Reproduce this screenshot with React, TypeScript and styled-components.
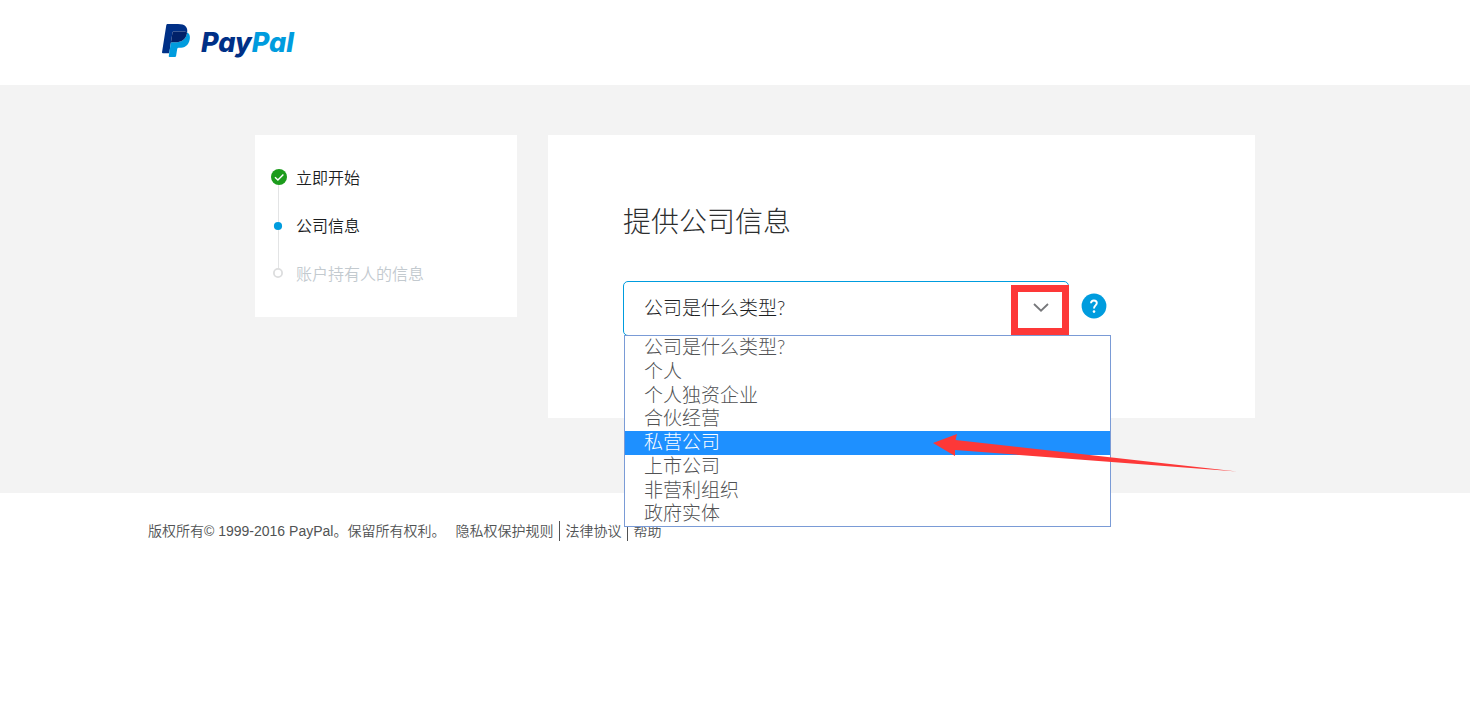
import React, { useState } from 'react';
import styled, { createGlobalStyle } from 'styled-components';

const GlobalStyle = createGlobalStyle`
  *, *::before, *::after { box-sizing: border-box; }
  body {
    margin: 0;
    background: #fff;
    color: #2c2e2f;
    font-family: "Liberation Sans", "Noto Sans CJK SC", sans-serif;
    font-weight: 300;
  }
`;

const Header = styled.header`
  height: 85px;
  max-width: 1174px;
  margin: 0 auto;
  padding: 24px 14px 0;
`;

const LogoLink = styled.a`
  display: inline-flex;
  align-items: flex-start;
  gap: 11px;
  text-decoration: none;
`;

const Wordmark = styled.span`
  font: italic 800 27px/37px Inter, sans-serif;
  color: #003087;
`;

const WordmarkTail = styled.span`
  color: #009cde;
`;

const Stage = styled.div`
  background: #f3f3f3;
  padding: 50px 0 75px;
`;

const Columns = styled.div`
  display: grid;
  grid-template-columns: 262px 1fr;
  align-items: start;
  gap: 31px;
  max-width: 1040px;
  margin: 0 auto;
  padding-left: 40px;
`;

const StepList = styled.ol`
  margin: 0;
  padding: 19px 16px;
  list-style: none;
  background: #fff;
`;

const Step = styled.li<{ $pending?: boolean }>`
  display: flex;
  align-items: center;
  gap: 9px;
  height: 48px;
  font-size: 16px;
  font-weight: 350;
  line-height: 24px;
  color: ${(p) => (p.$pending ? '#c3cacf' : '#1c1e1f')};
`;

const StepLabel = styled.span`
  padding-top: 2px;
`;

const Card = styled.main`
  background: #fff;
  padding: 68px 75px 82px;
`;

const Title = styled.h1`
  margin: 0 0 38px;
  font-size: 28px;
  line-height: 40px;
  font-weight: 300;
`;

const FieldRow = styled.div`
  position: relative;
  display: flex;
  align-items: flex-start;
  gap: 12px;
`;

const SelectBox = styled.div`
  position: relative;
  flex: 0 1 446px;
`;

const Select = styled.select`
  display: block;
  width: 100%;
  height: 55px;
  padding: 0 60px 2px 20px;
  appearance: none;
  border: 1px solid #009cde;
  border-radius: 5px;
  outline: none;
  background: #fff;
  color: #1c1e1f;
  font-family: Lato, "Noto Sans CJK SC", sans-serif;
  font-weight: 300;
  font-size: 19px;
`;

const Chevron = styled.svg`
  position: absolute;
  top: 22px;
  right: 20px;
  pointer-events: none;
`;

const Highlight = styled.div`
  position: absolute;
  top: 4px;
  right: 0;
  width: 58px;
  height: 50px;
  border: 7px solid #fd3838;
  pointer-events: none;
`;

const HelpButton = styled.button`
  display: flex;
  align-items: center;
  height: 50px;
  padding: 0;
  border: 0;
  background: none;
`;

const Menu = styled.ul`
  position: absolute;
  z-index: 1;
  top: 54px;
  left: 1px;
  display: grid;
  grid-auto-rows: 1fr;
  width: 487px;
  height: 192px;
  margin: 0;
  padding: 0;
  list-style: none;
  border: 1px solid #7a9bd6;
  background: #fff;
  font-family: Lato, "Noto Sans CJK SC", sans-serif;
`;

const MenuItem = styled.li<{ $active: boolean }>`
  padding-left: 19px;
  font-size: 19px;
  line-height: 22px;
  color: ${(p) => (p.$active ? '#fff' : '#515254')};
  background: ${(p) => (p.$active ? '#1e90ff' : 'transparent')};
`;

const Arrow = styled.svg`
  position: absolute;
  z-index: 2;
  top: 152px;
  left: 310px;
  pointer-events: none;
`;

const Footer = styled.footer`
  display: flex;
  gap: 10px;
  max-width: 1174px;
  margin: 0 auto;
  padding: 28px 0;
  font-size: 14px;
  font-weight: 350;
  line-height: 20px;
  color: #515354;
`;

const FooterLinks = styled.nav`
  display: flex;
`;

const FooterLink = styled.a`
  padding: 0 6px 0 5px;
  color: inherit;
  text-decoration: none;

  & + & { border-left: 1px solid #515354; }
  &:first-child { padding-left: 0; }
`;

const PayPalMark = () => (
  <svg width="28" height="33" viewBox="0 0 256 302" aria-hidden="true">
    <path fill="#003087" d="M102.397 68.84a11.737 11.737 0 0 1 5.053-1.14h73.318c8.682 0 16.78.565 24.18 1.756a101.6 101.6 0 0 1 6.177 1.182 89.928 89.928 0 0 1 8.59 2.347c3.638 1.215 7.026 2.63 10.14 4.287 3.67-23.416-.026-39.34-12.687-53.765C203.226 7.625 178.046.816 145.823.816H52.295C45.71.816 40.108 5.61 39.076 12.11L.136 259.068c-.774 4.878 2.997 9.282 7.925 9.282h57.744L95.888 77.58a11.717 11.717 0 0 1 6.509-8.74z" />
    <path fill="#009cde" d="M228.897 82.749c-12.328 63.32-54.53 85.221-108.429 85.221H93.024c-6.584 0-12.145 4.795-13.168 11.296L61.817 293.621c-.674 4.262 2.622 8.124 6.934 8.124h48.67a11.71 11.71 0 0 0 11.563-9.88l.474-2.48 9.173-58.136.591-3.213a11.71 11.71 0 0 1 11.562-9.88h7.284c47.147 0 84.064-19.154 94.852-74.55 4.503-23.15 2.173-42.478-9.739-56.054-3.613-4.112-8.1-7.508-13.327-10.28-.283 1.79-.59 3.604-.957 5.477z" />
    <path fill="#012169" d="M216.952 72.128a89.928 89.928 0 0 0-5.818-1.49 109.904 109.904 0 0 0-6.177-1.174c-7.408-1.199-15.5-1.765-24.19-1.765h-73.309a11.57 11.57 0 0 0-5.053 1.149 11.683 11.683 0 0 0-6.51 8.74l-15.582 98.798-.45 2.88c1.025-6.501 6.585-11.296 13.17-11.296h27.444c53.898 0 96.1-21.892 108.428-85.221.367-1.873.675-3.688.958-5.477-3.122-1.648-6.501-3.072-10.14-4.279a83.26 83.26 0 0 0-2.77-.865" />
  </svg>
);

type StepState = 'done' | 'current' | 'pending';

const StepMarker = ({ state }: { state: StepState }) => (
  <svg width="16" height="48" viewBox="0 0 16 48" aria-hidden="true">
    {state === 'done' && (
      <>
        <path d="M7.5 31V48" stroke="#e3e4e5" />
        <circle cx="8" cy="23" r="8" fill="#1c9c1c" />
        <path d="M4 23.2L6.9 26L12.4 20.4" fill="none" stroke="#fff" strokeWidth="1.4" />
      </>
    )}
    {state === 'current' && (
      <>
        <path d="M7.5 0V48" stroke="#e3e4e5" />
        <circle cx="7" cy="24" r="4.1" fill="#009cde" />
      </>
    )}
    {state === 'pending' && (
      <>
        <path d="M7.5 0V18" stroke="#e3e4e5" />
        <circle cx="7" cy="23" r="4.1" fill="#fff" stroke="#dcddde" strokeWidth="1.8" />
      </>
    )}
  </svg>
);

const steps: { label: string; state: StepState }[] = [
  { label: '立即开始', state: 'done' },
  { label: '公司信息', state: 'current' },
  { label: '账户持有人的信息', state: 'pending' },
];

const companyTypes = [
  '公司是什么类型?',
  '个人',
  '个人独资企业',
  '合伙经营',
  '私营公司',
  '上市公司',
  '非营利组织',
  '政府实体',
];

export default function App() {
  const [value, setValue] = useState(companyTypes[0]);
  const [active, setActive] = useState(4);

  return (
    <>
      <GlobalStyle />
      <Header>
        <LogoLink href="#" aria-label="PayPal">
          <PayPalMark />
          <Wordmark>
            Pay<WordmarkTail>Pal</WordmarkTail>
          </Wordmark>
        </LogoLink>
      </Header>
      <Stage>
        <Columns>
          <StepList>
            {steps.map((step) => (
              <Step key={step.label} $pending={step.state === 'pending'}>
                <StepMarker state={step.state} />
                <StepLabel>{step.label}</StepLabel>
              </Step>
            ))}
          </StepList>
          <Card>
            <Title>提供公司信息</Title>
            <FieldRow>
              <SelectBox>
                <Select
                  aria-label="公司是什么类型?"
                  value={value}
                  onChange={(e) => setValue(e.target.value)}
                >
                  {companyTypes.map((type) => (
                    <option key={type}>{type}</option>
                  ))}
                </Select>
                <Chevron width="16" height="10" viewBox="0 0 16 10" aria-hidden="true">
                  <path d="M1 1L8 7.7L15 1" fill="none" stroke="#77787b" strokeWidth="1.8" />
                </Chevron>
                <Highlight />
              </SelectBox>
              <HelpButton type="button" aria-label="帮助">
                <svg width="26" height="26" viewBox="0 0 26 26" aria-hidden="true">
                  <circle cx="13" cy="13" r="12.4" fill="#009cde" />
                  <path
                    d="M10 10.2C10.1 8.3 11.3 7.5 12.9 7.5C14.7 7.5 15.8 8.5 15.8 10.1C15.8 12.4 13 12.6 13 15.6"
                    fill="none"
                    stroke="#fff"
                    strokeWidth="1.9"
                  />
                  <circle cx="13" cy="18.6" r="1.3" fill="#fff" />
                </svg>
              </HelpButton>
              <Menu role="listbox" aria-label="公司类型">
                {companyTypes.map((type, i) => (
                  <MenuItem
                    key={type}
                    role="option"
                    aria-selected={i === active}
                    $active={i === active}
                    onMouseEnter={() => setActive(i)}
                    onClick={() => setValue(type)}
                  >
                    {type}
                  </MenuItem>
                ))}
              </Menu>
              <Arrow width="304" height="40" viewBox="0 0 304 40" aria-hidden="true">
                <path d="M0 10L24 1L22.5 7L304 38.5L22 17L22 23Z" fill="#fd3838" />
              </Arrow>
            </FieldRow>
          </Card>
        </Columns>
      </Stage>
      <Footer>
        <span>版权所有© 1999-2016 PayPal。保留所有权利。</span>
        <FooterLinks>
          <FooterLink href="#">隐私权保护规则</FooterLink>
          <FooterLink href="#">法律协议</FooterLink>
          <FooterLink href="#">帮助</FooterLink>
        </FooterLinks>
      </Footer>
    </>
  );
}
